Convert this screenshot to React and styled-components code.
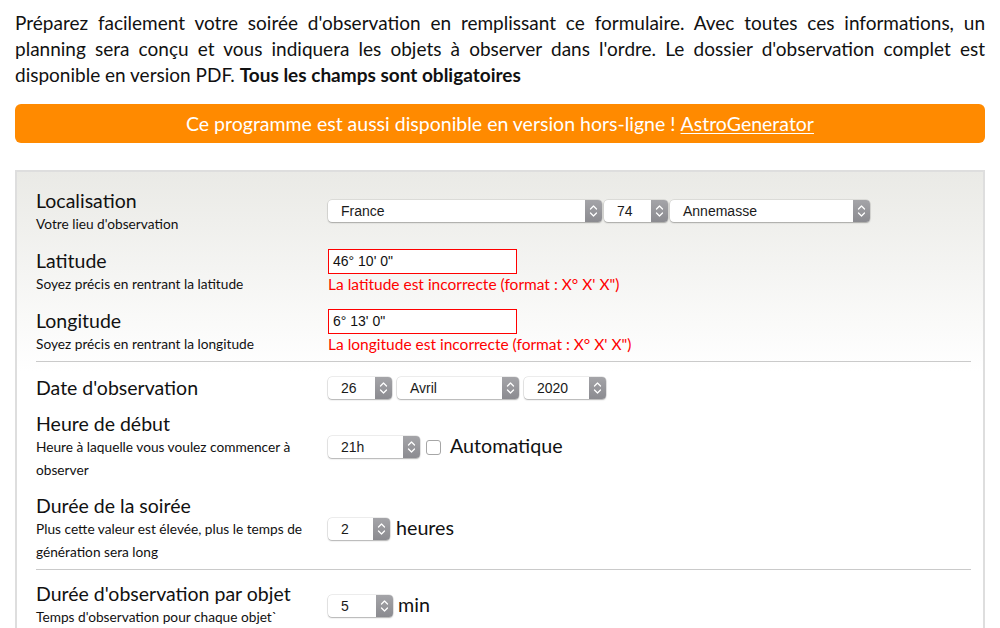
import React from 'react';
import styled, { createGlobalStyle } from 'styled-components';

const Global = createGlobalStyle`
  html, body { margin: 0; padding: 0; background: #fff; }
  body { font-family: Lato, "Open Sans", sans-serif; color: #111; }
`;

const Page = styled.div`
  padding: 10px 15px 0;
`;

const Intro = styled.p`
  margin: 0;
  font-size: 19px;
  line-height: 26px;
  color: #111;
`;

const IntroLine = styled.span`
  display: block;
  text-align: justify;
  text-align-last: ${(p) => (p.$last ? 'left' : 'justify')};
`;

const Banner = styled.div`
  margin-top: 16px;
  height: 39px;
  background: #ff8a00;
  border-radius: 6px;
  display: flex;
  align-items: center;
  justify-content: center;
  color: #fff;
  font-size: 19.5px;
  white-space: pre;
`;

const BannerLink = styled.a`
  color: #fff;
  text-decoration: underline;
  text-underline-offset: 2px;
`;

const Panel = styled.section`
  margin-top: 27px;
  border: 2px solid #dedede;
  border-bottom: none;
  background: linear-gradient(#eaeae6, #ffffff 200px);
  padding: 18px 12px 40px 19px;
`;

const Section = styled.div`
  display: flex;
  flex-direction: column;
  gap: 14px;
`;

const Separator = styled.hr`
  border: none;
  height: 1px;
  background: #cacaca;
  margin: ${(p) => p.$before || 7}px 0 ${(p) => p.$after || 14}px;
`;

const Row = styled.div`
  display: flex;
  align-items: center;
`;

const LabelCol = styled.div`
  width: 292px;
  flex: none;
  padding-right: 20px;
  box-sizing: border-box;
`;

const Title = styled.div`
  font-size: 19.5px;
  line-height: 22px;
  color: #111;
`;

const Sub = styled.div`
  font-size: 13.7px;
  line-height: 23px;
  color: #111;
`;

const Controls = styled.div`
  display: flex;
  align-items: center;
  gap: ${(p) => p.$gap || 0}px;
  margin-top: ${(p) => p.$mt || 0}px;
`;

const Stack = styled.div`
  display: flex;
  flex-direction: column;
`;

const SelectBox = styled.div`
  display: inline-flex;
  width: ${(p) => p.$w}px;
  height: 22px;
  background: #fff;
  border-radius: 4px;
  box-shadow: 0 0 0 0.5px rgba(0, 0, 0, 0.14), 0 1px 1.5px rgba(0, 0, 0, 0.25);
  overflow: hidden;
  flex: none;
`;

const SelectValue = styled.span`
  flex: 1;
  padding-left: 13px;
  font: 14px/22px "Liberation Sans", Arial, sans-serif;
  color: #1a1a1a;
`;

const SelectArrow = styled.span`
  width: 17px;
  display: flex;
  align-items: center;
  justify-content: center;
  background: linear-gradient(#a4a4a8, #8b8b90);
`;

const TextInput = styled.div`
  width: 189px;
  height: 25px;
  box-sizing: border-box;
  border: 1px solid #f00;
  background: #fff;
  padding-left: 4px;
  font: 14px/23px "Liberation Sans", Arial, sans-serif;
  color: #111;
`;

const ErrorText = styled.div`
  color: #ff0000;
  font-size: 15.5px;
  line-height: 21px;
`;

const Checkbox = styled.span`
  width: 15px;
  height: 15px;
  box-sizing: border-box;
  border: 1px solid #a6a6a6;
  border-radius: 3px;
  background: #fff;
  margin: 0 9px 0 6px;
`;

const Unit = styled.span`
  font-size: 19.7px;
  line-height: 22px;
  color: #111;
  margin-left: ${(p) => p.$ml || 0}px;
  margin-top: -2px;
`;

function Arrows() {
  return (
    <svg width="9" height="14" viewBox="0 0 9 14" fill="none">
      <path d="M1.5 5 L4.5 2 L7.5 5" stroke="#fff" strokeWidth="1.3" strokeLinecap="round" strokeLinejoin="round" />
      <path d="M1.5 9 L4.5 12 L7.5 9" stroke="#fff" strokeWidth="1.3" strokeLinecap="round" strokeLinejoin="round" />
    </svg>
  );
}

function Select({ w, value }) {
  return (
    <SelectBox $w={w} role="combobox">
      <SelectValue>{value}</SelectValue>
      <SelectArrow>
        <Arrows />
      </SelectArrow>
    </SelectBox>
  );
}

function Label({ title, sub }) {
  return (
    <LabelCol>
      <Title>{title}</Title>
      {sub && <Sub>{sub}</Sub>}
    </LabelCol>
  );
}

export default function App() {
  return (
    <>
      <Global />
      <Page>
        <Intro>
          <IntroLine>
            Préparez facilement votre soirée d'observation en remplissant ce formulaire. Avec toutes ces informations, un
          </IntroLine>
          <IntroLine>
            planning sera conçu et vous indiquera les objets à observer dans l'ordre. Le dossier d'observation complet est
          </IntroLine>
          <IntroLine $last>
            disponible en version PDF. <b>Tous les champs sont obligatoires</b>
          </IntroLine>
        </Intro>
        <Banner>
          Ce programme est aussi disponible en version hors-ligne ! <BannerLink href="#">AstroGenerator</BannerLink>
        </Banner>
        <Panel>
          <Section>
            <Row>
              <Label title="Localisation" sub="Votre lieu d'observation" />
              <Controls $gap={2} $mt={-3}>
                <Select w={274} value="France" />
                <Select w={64} value="74" />
                <Select w={200} value="Annemasse" />
              </Controls>
            </Row>
            <Row>
              <Label title="Latitude" sub="Soyez précis en rentrant la latitude" />
              <Stack>
                <TextInput>46° 10' 0"</TextInput>
                <ErrorText>La latitude est incorrecte (format : X° X' X")</ErrorText>
              </Stack>
            </Row>
            <Row>
              <Label title="Longitude" sub="Soyez précis en rentrant la longitude" />
              <Stack>
                <TextInput>6° 13' 0"</TextInput>
                <ErrorText>La longitude est incorrecte (format : X° X' X")</ErrorText>
              </Stack>
            </Row>
          </Section>
          <Separator $before={6} $after={15} />
          <Section>
            <Row>
              <Label title="Date d'observation" />
              <Controls $gap={5}>
                <Select w={64} value="26" />
                <Select w={122} value="Avril" />
                <Select w={82} value="2020" />
              </Controls>
            </Row>
            <Row>
              <Label title="Heure de début" sub="Heure à laquelle vous voulez commencer à observer" />
              <Controls>
                <Select w={92} value="21h" />
                <Checkbox />
                <Unit>Automatique</Unit>
              </Controls>
            </Row>
            <Row>
              <Label title="Durée de la soirée" sub="Plus cette valeur est élevée, plus le temps de génération sera long" />
              <Controls>
                <Select w={62} value="2" />
                <Unit $ml={6}>heures</Unit>
              </Controls>
            </Row>
          </Section>
          <Separator $before={6} $after={13} />
          <Section>
            <Row>
              <Label title="Durée d'observation par objet" sub="Temps d'observation pour chaque objet`" />
              <Controls>
                <Select w={65} value="5" />
                <Unit $ml={5}>min</Unit>
              </Controls>
            </Row>
          </Section>
        </Panel>
      </Page>
    </>
  );
}
